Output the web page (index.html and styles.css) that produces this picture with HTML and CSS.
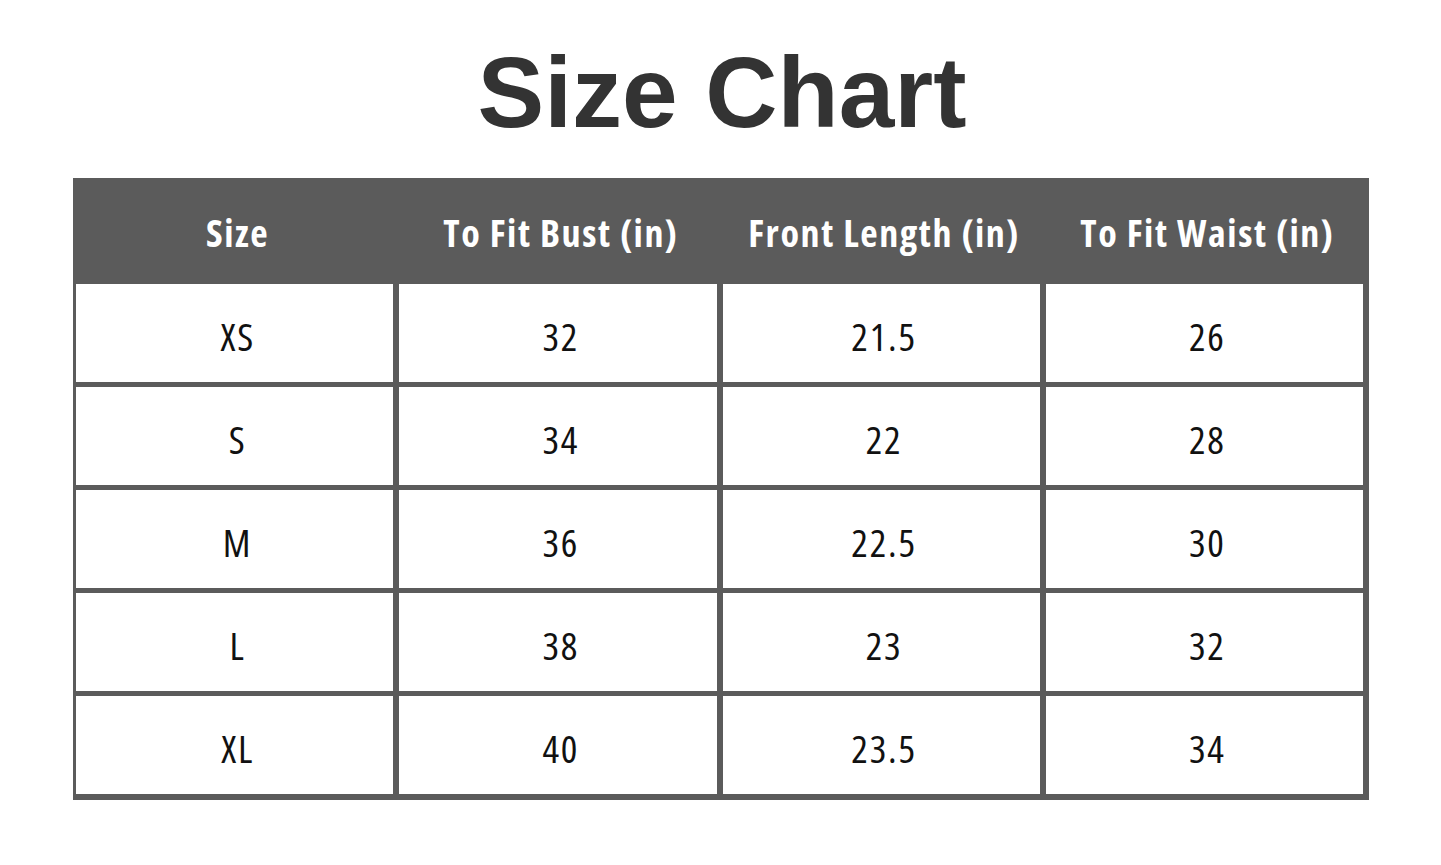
FILE: index.html
```html
<!DOCTYPE html>
<html lang="en">
<head>
<meta charset="utf-8">
<title>Size Chart</title>
<link rel="stylesheet" href="styles.css">
</head>
<body>
<main class="chart">
  <h1 class="title">Size Chart</h1>
  <div class="table">
    <div class="th">Size</div>
    <div class="th">To Fit Bust (in)</div>
    <div class="th">Front Length (in)</div>
    <div class="th">To Fit Waist (in)</div>

    <div class="td">XS</div><div class="td">32</div><div class="td">21.5</div><div class="td">26</div>
    <div class="td">S</div><div class="td">34</div><div class="td">22</div><div class="td">28</div>
    <div class="td">M</div><div class="td">36</div><div class="td">22.5</div><div class="td">30</div>
    <div class="td">L</div><div class="td">38</div><div class="td">23</div><div class="td">32</div>
    <div class="td">XL</div><div class="td">40</div><div class="td">23.5</div><div class="td">34</div>
  </div>
</main>
</body>
</html>
```

FILE: styles.css
```css
html, body {
  margin: 0;
  padding: 0;
  background: #ffffff;
}

.chart {
  width: 1296px;
  margin-left: 73px;
  padding-top: 42px;
}

.title {
  margin: 0 0 36px 0;
  font-family: "Liberation Sans", Arial, sans-serif;
  font-weight: 700;
  font-size: 100px;
  line-height: 100px;
  color: #333333;
  text-align: center;
  padding-left: 2px;
}

.table {
  display: grid;
  grid-template-columns: repeat(4, 1fr);
  column-gap: 6px;
  row-gap: 5px;
  background: #5b5b5b;
  padding: 0 6px 6px 3px;
  font-family: "Open Sans", sans-serif;
  font-stretch: 75%;
}

.th {
  height: 101px;
  display: flex;
  align-items: center;
  justify-content: center;
  color: #ffffff;
  font-weight: 700;
  font-size: 38px;
  letter-spacing: 1.6px;
  padding-top: 6px;
  padding-left: 6px;
  box-sizing: border-box;
}

.td {
  height: 98px;
  background: #ffffff;
  display: flex;
  align-items: center;
  justify-content: center;
  color: #111111;
  font-weight: 400;
  font-size: 39px;
  letter-spacing: 1.8px;
  padding-top: 4px;
  padding-left: 6px;
  box-sizing: border-box;
}
```
